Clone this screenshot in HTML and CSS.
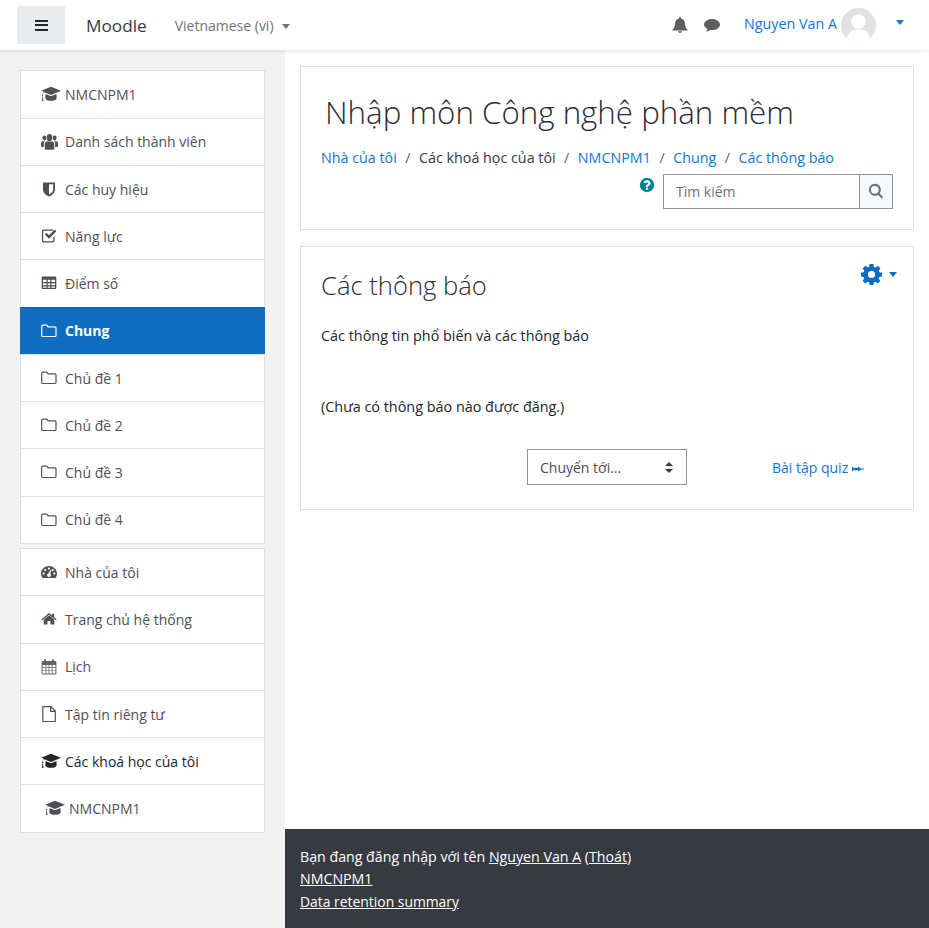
FILE: index.html
```html
<!DOCTYPE html>
<html lang="vi">
<head>
    <meta charset="UTF-8">
    <meta name="viewport" content="width=device-width, initial-scale=1.0">
    <title>Các thông báo</title>
    <link rel="stylesheet" href="styles.css">
</head>
<body>
    <svg class="sprites" xmlns="http://www.w3.org/2000/svg">
        <symbol id="i-cap" viewBox="0 0.8 20 14" preserveAspectRatio="none"><path d="M10 1.500 20 5l-10 3.600L2.600 6c-.5.600-.7 1.400-.8 2.300.4.200.5.500.5.800 0 .3-.1.500-.4.700l.6 4.200H.9l.6-4.200c-.3-.2-.4-.4-.4-.7 0-.3.200-.6.500-.8.100-1 .3-2 .8-2.800L0 5z"/><path d="M4.600 7.800 10 9.800l5.400-2 .3 3.400c0 1.500-2.600 2.500-5.700 2.500s-5.700-1-5.700-2.500z"/></symbol>
        <symbol id="i-users" viewBox="0 1.200 18 13.300" preserveAspectRatio="none"><circle cx="3.500" cy="4.500" r="2"/><circle cx="14.500" cy="4.500" r="2"/><circle cx="9" cy="4.200" r="3"/><path d="M0 11V9c0-1 .7-1.800 1.800-1.800h2c-.5.600-.8 1.300-.8 2.200V12H1c-.6 0-1-.4-1-1zM18 11V9c0-1-.7-1.800-1.800-1.800h-2c.5.600.8 1.300.8 2.200V12h2c.6 0 1-.4 1-1zM4 9.500C4 8.300 4.900 7.500 6 7.500h6c1.100 0 2 .8 2 2V13c0 .8-.6 1.300-1.300 1.300H5.300C4.600 14.300 4 13.800 4 13z"/></symbol>
        <symbol id="i-shield" viewBox="0 0 16 16"><path fill-rule="evenodd" d="M2 1.500h12v7c0 3.500-3.200 5.800-6 7-2.800-1.200-6-3.500-6-7zM8 3.300v10.200c2-1 4.200-2.700 4.200-5V3.300z"/></symbol>
        <symbol id="i-check" viewBox="0 0 16 16"><path d="M3 1.500h9v1.300H3c-.5 0-.8.300-.8.800v8.800c0 .5.300.8.800.8h8.500c.5 0 .8-.3.800-.8V9.300l1.300-1.300v4.400c0 1.200-.9 2.100-2.100 2.100H3c-1.200 0-2.100-.9-2.100-2.100V3.600C.9 2.400 1.800 1.500 3 1.500z"/><path d="m3.800 6.500 1.700-1.700L8 7.300l5.700-5.700L15.400 3.300 8 10.700z"/></symbol>
        <symbol id="i-table" viewBox="0 0 16 16"><path fill-rule="evenodd" d="M1.800 1.500h12.400c.6 0 1.100.5 1.100 1.100v10.300c0 .6-.5 1.100-1.100 1.100H1.800c-.6 0-1.100-.5-1.100-1.100V2.600c0-.6.500-1.100 1.100-1.100zM2 4.800v2.300h3.500V4.800zm4.700 0v2.300h2.600V4.800zm3.800 0v2.300H14V4.800zM2 8.200v2.100h3.500V8.200zm4.700 0v2.100h2.600V8.200zm3.800 0v2.100H14V8.200zM2 11.400v1.400h3.500v-1.400zm4.700 0v1.400h2.600v-1.400zm3.800 0v1.400H14v-1.400z"/></symbol>
        <symbol id="i-folder" viewBox="0 0 16 16"><path fill="none" stroke="currentColor" stroke-width="1.200" d="M1.800 2.100h3.400c.6 0 .9.200 1.200.7l.5 1h7c.6 0 1.100.5 1.100 1.100v7.500c0 .6-.5 1.100-1.100 1.100H1.800c-.6 0-1.100-.5-1.100-1.100V3.200c0-.6.500-1.100 1.100-1.100z"/></symbol>
        <symbol id="i-gauge" viewBox="0 0 16 16"><path fill-rule="evenodd" d="M8 2c4.200 0 8 3.300 8 7.500 0 1.400-.4 2.700-1.100 3.900-.2.400-.5.600-.9.600H2c-.4 0-.7-.2-.9-.6C.4 12.200 0 10.900 0 9.500 0 5.300 3.800 2 8 2zM8 3.500a1.100 1.100 0 1 0 0 2.200 1.100 1.100 0 0 0 0-2.200zM4.200 5a1.100 1.100 0 1 0 0 2.200 1.100 1.100 0 0 0 0-2.200zM11.800 5a1.100 1.100 0 1 0 0 2.200 1.100 1.100 0 0 0 0-2.200zM2.700 8.500a1.100 1.100 0 1 0 0 2.200 1.100 1.100 0 0 0 0-2.200zM13.300 8.500a1.100 1.100 0 1 0 0 2.200 1.100 1.100 0 0 0 0-2.200zM9.400 6 7.300 9.800c-.8.200-1.300.8-1.300 1.500 0 .9.900 1.700 2 1.700s2-.8 2-1.700c0-.6-.3-1.100-.8-1.400L10.300 6.300z"/></symbol>
        <symbol id="i-home" viewBox="0 0 16 16"><path d="M8 4.300 13.300 8.700V13c0 .4-.2.600-.6.600H9.500V10h-3v3.600H3.300c-.4 0-.6-.2-.6-.6V8.700z"/><path d="M8 2 11.200 4.600V2.800h1.900v3.400L15.600 8.300l-.8 1L8 3.700 1.200 9.300l-.8-1z"/></symbol>
        <symbol id="i-calendar" viewBox="0 0 16 16"><path fill-rule="evenodd" d="M4 .3c.6 0 1 .4 1 1V2h6v-.7c0-.6.400-1 1-1s1 .4 1 1V2h1.200c.7 0 1.200.5 1.200 1.200v11c0 .7-.5 1.200-1.200 1.200H1.800c-.7 0-1.200-.5-1.200-1.200v-11C.6 2.500 1.100 2 1.800 2H3v-.7c0-.6.400-1 1-1zM1.600 6v2.300h2.900V6zm3.700 0v2.300h2.300V6zm3.100 0v2.300h2.300V6zm3.100 0v2.300h2.900V6zM1.600 9v2.400h2.900V9zm3.700 0v2.400h2.300V9zm3.100 0v2.400h2.300V9zm3.100 0v2.400h2.900V9zM1.600 12.100v2.300h2.900v-2.300zm3.700 0v2.300h2.300v-2.300zm3.100 0v2.300h2.300v-2.300zm3.100 0v2.300h2.900v-2.300z"/></symbol>
        <symbol id="i-file" viewBox="0 0 16 16"><path fill="none" stroke="currentColor" stroke-width="1.200" d="M1.800.6h8l4.500 4.500v10c0 .3-.2.500-.5.500H2.300c-.3 0-.5-.2-.5-.5zM9.600.8v4.500h4.500"/></symbol>
        <symbol id="i-bell" viewBox="0 0 16 16"><path d="M8 0c.6 0 1 .4 1 1v.6c2.500.5 4 2.400 4 5 0 3.500 1.200 4.800 2.500 6.100V13.500H.5v-.8C1.800 11.400 3 10.100 3 6.600c0-2.600 1.500-4.500 4-5V1c0-.6.400-1 1-1zM6 14.300h4c0 1-.9 1.700-2 1.700s-2-.7-2-1.700z"/></symbol>
        <symbol id="i-comment" viewBox="0 0 16 16"><path d="M8 2c4.400 0 8 2.500 8 5.600s-3.600 5.600-8 5.600c-.6 0-1.200 0-1.800-.1C5.100 14 3.700 14.500 2 14.800c.8-.9 1.300-1.700 1.500-2.700C1.400 11.100 0 9.500 0 7.600 0 4.500 3.600 2 8 2z"/></symbol>
        <symbol id="i-help" viewBox="0 0 16 16"><path fill-rule="evenodd" d="M8 .8a7.200 7.200 0 1 1 0 14.400A7.200 7.200 0 0 1 8 .8zM6.900 10.700v2h2.200v-2zM8.100 3.300c-1.700 0-2.900.8-3.600 2L6 6.400c.5-.6.900-1 1.900-1 .7 0 1.300.4 1.300 1 0 .5-.4.800-1.100 1.200-.8.500-1.200 1-1.200 2v.3h2.200c0-.7.300-.9 1-1.300.8-.5 1.500-1.100 1.500-2.300 0-1.800-1.800-3-3.500-3z"/></symbol>
        <symbol id="i-search" viewBox="0 0 16 16"><path fill-rule="evenodd" d="M6.800.8a6 6 0 0 1 4.800 9.600l3.500 3.500-1.500 1.500-3.500-3.500A6 6 0 1 1 6.800.8zm0 2.100a3.900 3.900 0 1 0 0 7.800 3.900 3.900 0 0 0 0-7.800z"/></symbol>
        <symbol id="i-gear" viewBox="0 0 20 20"><path fill-rule="evenodd" d="M8.200 0h3.600l.4 2.700 1.500.6L16 1.700l2.500 2.500-1.600 2.300.6 1.400 2.500.5v3.500l-2.600.5-.6 1.400 1.600 2.300-2.500 2.500-2.300-1.600-1.400.6-.4 2.300H8.200l-.5-2.400-1.400-.6L4 18.500 1.500 16l1.600-2.200-.6-1.500L0 11.800V8.300l2.500-.4.600-1.500-1.500-2.200L4.100 1.700l2.200 1.500 1.500-.6zM10 6.600a3.400 3.400 0 1 0 0 6.800 3.400 3.400 0 0 0 0-6.800z"/></symbol>
        <symbol id="i-arrow" viewBox="0 0 12 8"><path d="M0 1.800h1v1h5V1.600l3.200 1.900H12v1H9.200L6 6.400V5.200H1v1H0z"/></symbol>
    </svg>

    <header class="navbar">
        <button class="menu-toggle" type="button" aria-label="Menu">
            <span></span><span></span><span></span>
        </button>
        <a class="brand" href="#">Moodle</a>
        <a class="lang" href="#">Vietnamese ‎(vi)‎<i class="caret"></i></a>
        <div class="nav-right">
            <svg class="nav-icon"><use href="#i-bell"/></svg>
            <svg class="nav-icon nav-comment"><use href="#i-comment"/></svg>
            <a class="user-name" href="#">Nguyen Van A</a>
            <svg class="avatar" viewBox="0 0 36 36">
                <circle cx="18" cy="18" r="18" fill="#e2e2e2"/>
                <circle cx="18" cy="14" r="7.500" fill="#fff"/>
                <path d="M6 31c1-7 6-9 12-9s11 2 12 9c-3 3-7.500 5-12 5s-9-2-12-5z" fill="#fff"/>
            </svg>
            <i class="caret caret-blue"></i>
        </div>
    </header>

    <div class="page">
        <nav class="drawer">
            <ul class="side-list">
                <li><svg class="ico ico-cap"><use href="#i-cap"/></svg>NMCNPM1</li>
                <li><svg class="ico ico-wide"><use href="#i-users"/></svg>Danh sách thành viên</li>
                <li><svg class="ico"><use href="#i-shield"/></svg>Các huy hiệu</li>
                <li><svg class="ico"><use href="#i-check"/></svg>Năng lực</li>
                <li><svg class="ico"><use href="#i-table"/></svg>Điểm số</li>
                <li class="active"><svg class="ico"><use href="#i-folder"/></svg>Chung</li>
                <li><svg class="ico"><use href="#i-folder"/></svg>Chủ đề 1</li>
                <li><svg class="ico"><use href="#i-folder"/></svg>Chủ đề 2</li>
                <li><svg class="ico"><use href="#i-folder"/></svg>Chủ đề 3</li>
                <li><svg class="ico"><use href="#i-folder"/></svg>Chủ đề 4</li>
            </ul>
            <ul class="side-list">
                <li><svg class="ico"><use href="#i-gauge"/></svg>Nhà của tôi</li>
                <li><svg class="ico"><use href="#i-home"/></svg>Trang chủ hệ thống</li>
                <li><svg class="ico ico-light"><use href="#i-calendar"/></svg>Lịch</li>
                <li><svg class="ico"><use href="#i-file"/></svg>Tập tin riêng tư</li>
                <li class="dark"><svg class="ico ico-cap"><use href="#i-cap"/></svg>Các khoá học của tôi</li>
                <li class="nested"><svg class="ico ico-cap"><use href="#i-cap"/></svg>NMCNPM1</li>
            </ul>
        </nav>

        <div class="content">
            <main class="main">
                <section class="card head-card">
                    <h1>Nhập môn Công nghệ phần mềm</h1>
                    <ol class="crumbs">
                        <li><a href="#">Nhà của tôi</a></li>
                        <li>Các khoá học của tôi</li>
                        <li><a href="#">NMCNPM1</a></li>
                        <li><a href="#">Chung</a></li>
                        <li><a href="#">Các thông báo</a></li>
                    </ol>
                    <div class="search-row">
                        <svg class="help"><use href="#i-help"/></svg>
                        <div class="search">
                            <span class="search-text">Tìm kiếm</span>
                            <span class="search-btn"><svg><use href="#i-search"/></svg></span>
                        </div>
                    </div>
                </section>

                <section class="card forum-card">
                    <div class="gear">
                        <svg><use href="#i-gear"/></svg>
                        <i class="caret caret-blue"></i>
                    </div>
                    <h2>Các thông báo</h2>
                    <p class="intro">Các thông tin phổ biến và các thông báo</p>
                    <p class="empty">(Chưa có thông báo nào được đăng.)</p>
                    <div class="jump-row">
                        <div class="jump">
                            <span>Chuyển tới...</span>
                            <span class="updown"></span>
                        </div>
                        <a class="next" href="#">Bài tập quiz <svg><use href="#i-arrow"/></svg></a>
                    </div>
                </section>
            </main>

            <footer class="footer">
                <div class="foot-line">Bạn đang đăng nhập với tên <a href="#">Nguyen Van A</a> (<a href="#">Thoát</a>)</div>
                <div class="foot-line"><a href="#">NMCNPM1</a></div>
                <div class="foot-line foot-last"><a href="#">Data retention summary</a></div>
            </footer>
        </div>
    </div>
</body>
</html>
```

FILE: styles.css
```css
* {
    box-sizing: border-box;
}
body {
    margin: 0;
    font-family: 'Open Sans', 'Noto Sans', sans-serif;
    font-size: 14px;
    line-height: 22.500px;
    color: #373a3c;
    background: #fff;
}
a {
    color: #1177d1;
    text-decoration: none;
}
ul, ol {
    list-style: none;
    margin: 0;
    padding: 0;
}
.sprites {
    display: none;
}

/* top bar */
.navbar {
    height: 50px;
    display: flex;
    align-items: center;
    padding-left: 17px;
    background: #fff;
    box-shadow: 0 2px 4px rgba(0, 0, 0, 0.08);
    position: relative;
}
.menu-toggle {
    width: 48px;
    height: 38px;
    border: 0;
    padding: 0;
    background: #e9ecef;
    display: flex;
    flex-direction: column;
    align-items: center;
    justify-content: center;
    gap: 2.500px;
}
.menu-toggle span {
    width: 13px;
    height: 2px;
    background: #212529;
}
.brand {
    margin-left: 21px;
    padding-top: 2px;
    font-size: 17.200px;
    color: #343a40;
}
.lang {
    margin-left: 28px;
    padding-top: 2px;
    color: #6f7479;
}
.caret {
    display: inline-block;
    margin-left: 8px;
    vertical-align: 2px;
    border-top: 5px solid #6f7479;
    border-left: 4.500px solid transparent;
    border-right: 4.500px solid transparent;
}
.caret-blue {
    border-top-color: #1177d1;
}
.nav-right {
    margin-left: auto;
    display: flex;
    align-items: center;
    padding-right: 25px;
}
.nav-icon {
    width: 16px;
    height: 16px;
    fill: #5f5f5f;
}
.nav-comment {
    margin-left: 16px;
}
.user-name {
    margin-left: 24px;
    margin-top: -2px;
    font-size: 14.300px;
}
.avatar {
    width: 35px;
    height: 35px;
    margin-left: 4px;
}
.nav-right .caret {
    margin-left: 20px;
    margin-top: -6px;
}

/* left drawer */
.page {
    display: flex;
    min-height: 878px;
}
.drawer {
    width: 285px;
    flex: none;
    background: #f2f2f2;
    padding: 20px 20px 0;
}
.side-list {
    border: 1px solid #dfdfdf;
    background: #fff;
    margin-bottom: 4px;
}
.side-list li {
    height: 47.250px;
    display: flex;
    align-items: center;
    padding-left: 20px;
    padding-top: 2px;
    color: #4d5156;
    border-top: 1px solid #dfdfdf;
}
.side-list li:first-child {
    border-top: 0;
    height: 46.500px;
}
.side-list .active {
    background: #0f6cbf;
    color: #fff;
    font-weight: 700;
    margin: 0 -1px;
    padding-left: 21px;
    border-top-color: #0f6cbf;
}
.side-list .dark {
    color: #212529;
}
.side-list .nested {
    padding-left: 24px;
}
.ico {
    width: 16px;
    height: 16px;
    margin-right: 8px;
    fill: #4d5156;
    color: #4d5156;
    flex: none;
    margin-top: -2px;
}
.ico-cap {
    width: 20px;
    margin-right: 4px;
}
.ico-wide {
    width: 17px;
    margin-right: 7px;
}
.ico-light {
    fill: #5f6368;
}
.active .ico {
    fill: #fff;
    color: #fff;
}
.dark .ico {
    fill: #212529;
}

/* main column */
.content {
    flex: 1;
    display: flex;
    flex-direction: column;
    min-width: 0;
}
.main {
    flex: 1;
    padding: 16px 15px 0;
}
.card {
    border: 1px solid #dfdfdf;
    background: #fff;
}
.head-card {
    height: 164px;
    padding: 19px 20px 0;
}
h1 {
    margin: 0 0 0 4px;
    font-size: 31.300px;
    line-height: 52px;
    font-weight: 300;
    color: #2a2e33;
}
.crumbs {
    display: flex;
    margin-top: 9px;
    font-size: 14.300px;
}
.crumbs li + li::before {
    content: "/";
    padding: 0 8.500px;
    color: #5c6166;
}
.search-row {
    display: flex;
    justify-content: flex-end;
    align-items: flex-start;
    margin-top: 4px;
}
.help {
    width: 16px;
    height: 16px;
    fill: #008196;
    margin: 3px 8px 0 -1px;
}
.search {
    width: 230px;
    height: 35px;
    border: 1px solid #8f959e;
    display: flex;
}
.search-text {
    flex: 1;
    padding-left: 12px;
    line-height: 33px;
    color: #6a737b;
}
.search-btn {
    width: 33px;
    border-left: 1px solid #8f959e;
    background: #f8f9fa;
    display: flex;
    align-items: center;
    justify-content: center;
}
.search-btn svg {
    width: 16px;
    height: 16px;
    fill: #6a737b;
}
.forum-card {
    position: relative;
    height: 264px;
    margin-top: 16px;
    padding: 21px 20px 20px;
}
.gear {
    position: absolute;
    top: 17px;
    right: 16px;
    display: flex;
    align-items: center;
}
.gear svg {
    width: 21px;
    height: 21px;
    fill: #0f6cbf;
}
.gear .caret {
    margin-left: 7px;
    border-top-color: #0f6cbf;
}
h2 {
    margin: 0;
    font-size: 25.600px;
    line-height: 36px;
    font-weight: 300;
    color: #2a2e33;
}
.intro {
    margin: 21px 0 0;
    font-size: 14.400px;
    color: #212529;
}
.empty {
    margin: 48px 0 0;
    font-size: 14.400px;
    color: #212529;
}
.jump-row {
    display: flex;
    align-items: center;
    margin-top: 31px;
    padding-left: 206px;
}
.jump {
    width: 160px;
    height: 36px;
    border: 1px solid #8f959e;
    display: flex;
    align-items: center;
    justify-content: space-between;
    padding: 2px 12px 0;
    color: #495057;
}
.updown {
    width: 9px;
    height: 11px;
    position: relative;
    top: -1px;
}
.updown::before, .updown::after {
    content: "";
    position: absolute;
    left: 0;
    border-left: 4.500px solid transparent;
    border-right: 4.500px solid transparent;
}
.updown::before {
    top: 0;
    border-bottom: 4.500px solid #343a40;
}
.updown::after {
    bottom: 0;
    border-top: 4.500px solid #343a40;
}
.next {
    margin-left: 85px;
    padding-top: 2px;
}
.next svg {
    width: 12px;
    height: 8px;
    fill: #1177d1;
}

/* footer */
.footer {
    height: 99px;
    background: #373a41;
    color: #fff;
    padding: 16.500px 15px 0;
    font-size: 14.200px;
}
.foot-last {
    font-size: 13.900px;
}
.footer a {
    color: #fff;
    text-decoration: underline;
}
```
